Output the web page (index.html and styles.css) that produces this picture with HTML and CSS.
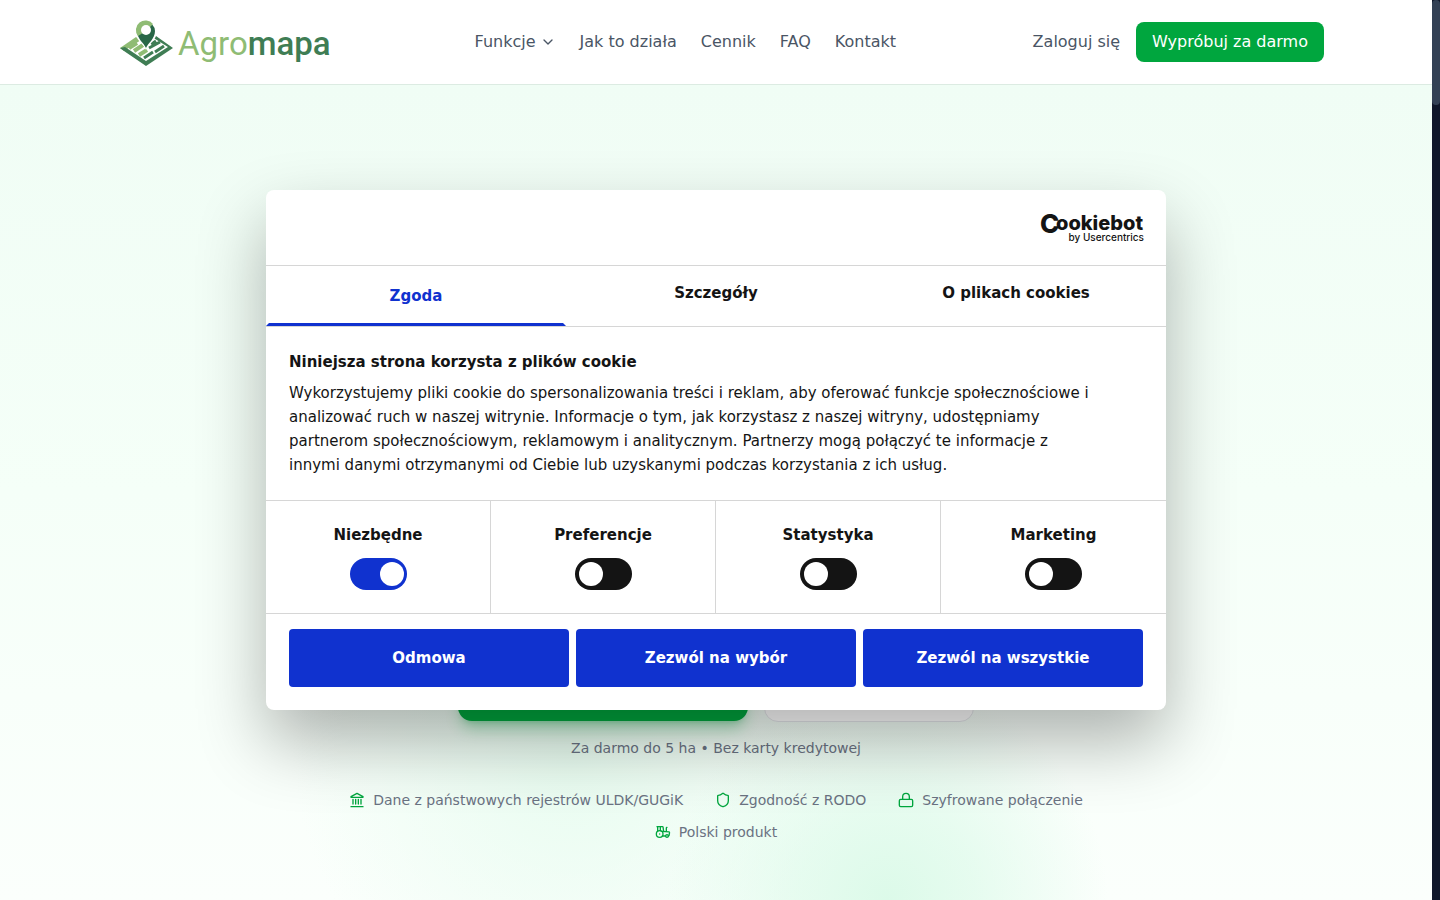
FILE: index.html
```html
<!DOCTYPE html>
<html lang="pl">
<head>
<meta charset="utf-8">
<meta name="viewport" content="width=device-width, initial-scale=1">
<title>Agromapa</title>
<link rel="stylesheet" href="styles.css">
</head>
<body class="page">
<div class="site">
  <header class="header">
    <div class="header-inner">
      <a class="logo" href="#" aria-label="Agromapa">
        <svg width="230" height="52" viewBox="0 0 230 52">
          <path d="M28 21 12 32 16 35 33 24Z" fill="#8fbc74"/>
          <path d="M16 35 12 32 17 31 38 45 60 31 44 21 48 20 65 32 38 50Z" fill="#3f7d54"/>
          <path d="m21 32 8-5M26 35l9-6M31 39l8-5" stroke="#8fbc74" stroke-width="4"/>
          <path d="m36 42 9-6M43 28l5-3M41 32l11-6M47 36l9-6" stroke="#3f7d54" stroke-width="3"/>
          <path d="M38 34C36 28 27 24 27 15a11 11 0 0 1 22 0c0 9-9 13-11 19Z" fill="#fff"/>
          <path d="M38 32C36 27 29 23 29 15a9 9 0 0 1 18 0c0 8-7 12-9 17Z" fill="#286747"/>
          <path d="M30 20a9 9 0 0 1 15-12L38 15Z" fill="#8fbc74"/>
          <circle cx="38" cy="14" r="5" fill="#fff"/>
          <text x="70" y="39" class="logo-text"><tspan class="logo-light">Agro</tspan><tspan class="logo-dark">mapa</tspan></text>
        </svg>
      </a>
      <nav class="nav" aria-label="Menu">
        <button class="nav-link nav-button" type="button">Funkcje
          <svg width="16" height="16" viewBox="0 0 24 24" fill="none" stroke="currentColor" stroke-width="2" stroke-linecap="round" stroke-linejoin="round"><path d="m6 9 6 6 6-6"/></svg>
        </button>
        <a class="nav-link" href="#">Jak to działa</a>
        <a class="nav-link" href="#">Cennik</a>
        <a class="nav-link" href="#">FAQ</a>
        <a class="nav-link" href="#">Kontakt</a>
      </nav>
      <div class="account">
        <a class="nav-link" href="#">Zaloguj się</a>
        <a class="cta" href="#">Wypróbuj za darmo</a>
      </div>
    </div>
  </header>
  <main class="hero">
    <div class="hero-actions">
      <button class="hero-button hero-primary" type="button" aria-label="Wypróbuj za darmo"></button>
      <button class="hero-button hero-secondary" type="button" aria-label="Jak to działa"></button>
    </div>
    <p class="hero-note">Za darmo do 5 ha • Bez karty kredytowej</p>
    <ul class="trust">
      <li class="trust-item">
        <svg class="trust-icon" viewBox="0 0 24 24"><path d="M3 22h18M6 18v-7M10 18v-7M14 18v-7M18 18v-7M3 7l9-5 9 5v1H3z"/></svg>
        Dane z państwowych rejestrów ULDK/GUGiK
      </li>
      <li class="trust-item">
        <svg class="trust-icon" viewBox="0 0 24 24"><path d="M20 13c0 5-3.500 7.500-7.660 8.950a1 1 0 0 1-.67-.01C7.500 20.500 4 18 4 13V6a1 1 0 0 1 1-1c2 0 4.500-1.200 6.240-2.720a1.170 1.170 0 0 1 1.520 0C14.510 3.810 17 5 19 5a1 1 0 0 1 1 1z"/></svg>
        Zgodność z RODO
      </li>
      <li class="trust-item">
        <svg class="trust-icon" viewBox="0 0 24 24"><rect x="2" y="11" width="20" height="11" rx="2"/><path d="M7 11V7a5 5 0 0 1 10 0v4"/></svg>
        Szyfrowane połączenie
      </li>
      <li class="trust-item">
        <svg class="trust-icon" viewBox="0 0 24 24"><path d="m10 11 11 .9a1 1 0 0 1 .8 1.100l-.665 4.158a1 1 0 0 1-.988.842H20M16 18h-5M18 5a1 1 0 0 0-1 1v5.573M3 4h8.129a1 1 0 0 1 .99.863L13 11.246M4 11V4M7 15h.01M8 10.100V4"/><circle cx="18" cy="18" r="2"/><circle cx="7" cy="15" r="5"/></svg>
        Polski produkt
      </li>
    </ul>
  </main>
</div>
<div class="scroll-track"><div class="scroll-thumb"></div></div>

<div class="overlay">
  <section class="dialog" role="dialog" aria-labelledby="dialog-title">
    <div class="dialog-head">
      <svg class="cookiebot" width="108" height="44" viewBox="0 0 108 44" role="img" aria-label="Cookiebot by Usercentrics">
        <text class="cb-name"><tspan class="cb-initial" x="1" y="28">C</tspan><tspan x="17" y="25">ookiebot</tspan></text>
        <text class="cb-by" x="105" y="36" text-anchor="end">by Usercentrics</text>
      </svg>
    </div>
    <div class="tabs" role="tablist">
      <button class="tab tab-active" type="button" role="tab" aria-selected="true">Zgoda</button>
      <button class="tab" type="button" role="tab" aria-selected="false">Szczegóły</button>
      <button class="tab" type="button" role="tab" aria-selected="false">O plikach cookies</button>
    </div>
    <div class="dialog-body">
      <h2 class="dialog-title" id="dialog-title">Niniejsza strona korzysta z plików cookie</h2>
      <p class="dialog-text">Wykorzystujemy pliki cookie do spersonalizowania treści i reklam, aby oferować funkcje społecznościowe i analizować ruch w naszej witrynie. Informacje o tym, jak korzystasz z naszej witryny, udostępniamy partnerom społecznościowym, reklamowym i analitycznym. Partnerzy mogą połączyć te informacje z innymi danymi otrzymanymi od Ciebie lub uzyskanymi podczas korzystania z ich usług.</p>
    </div>
    <div class="choices">
      <label class="choice">Niezbędne<input class="switch" type="checkbox" checked></label>
      <label class="choice">Preferencje<input class="switch" type="checkbox"></label>
      <label class="choice">Statystyka<input class="switch" type="checkbox"></label>
      <label class="choice">Marketing<input class="switch" type="checkbox"></label>
    </div>
    <div class="dialog-actions">
      <button class="action" type="button">Odmowa</button>
      <button class="action" type="button">Zezwól na wybór</button>
      <button class="action" type="button">Zezwól na wszystkie</button>
    </div>
  </section>
</div>
</body>
</html>
```
FILE: styles.css
```css
* {
  box-sizing: border-box;
}

.page {
  margin: 0;
  min-height: 100vh;
  display: flex;
  position: relative;
  font-family: "DejaVu Sans", sans-serif;
  font-size: 16px;
  line-height: 24px;
  color: #141414;
}

button {
  font: inherit;
  color: inherit;
  border: 0;
  background: none;
  padding: 0;
  cursor: pointer;
}

a {
  color: inherit;
  text-decoration: none;
}

svg {
  display: block;
  flex: none;
}

.site {
  flex: 1;
  display: flex;
  flex-direction: column;
}

.scroll-track {
  width: 8px;
  background: #0f172a;
}

.scroll-thumb {
  height: 105px;
  border-radius: 4px;
  background: #334155;
}

.header {
  background: #fff;
  border-bottom: 1px solid #dcebe2;
}

.header-inner {
  max-width: 1280px;
  margin: 0 auto;
  padding: 16px 32px;
  display: flex;
  align-items: center;
  justify-content: space-between;
}

.logo-text {
  font-family: Roboto, sans-serif;
  font-size: 33px;
}

.logo-light {
  fill: #8fbc74;
}

.logo-dark {
  fill: #3f7d54;
  font-weight: 500;
}

.nav {
  display: flex;
  gap: 24px;
}

.nav-link {
  color: #4a5565;
}

.nav-button {
  display: flex;
  align-items: center;
  gap: 4px;
}

.account {
  display: flex;
  align-items: center;
  gap: 16px;
}

.cta {
  padding: 8px 16px;
  border-radius: 8px;
  background: #00a63e;
  color: #fff;
}

.hero {
  flex: 1;
  display: flex;
  flex-direction: column;
  align-items: center;
  justify-content: flex-end;
  padding: 96px 32px 58px;
  background:
    radial-gradient(circle at 62% 100%, #dcfae9 0, #dcfae9aa 90px, #dcfae900 220px),
    radial-gradient(circle at 40% 82%, #e8fcf0 0, #e8fcf000 280px),
    linear-gradient(#f0fdf5, #f5fff8 50%, #fbfffc);
}

.hero-actions {
  display: flex;
  align-items: flex-start;
  gap: 16px;
}

.hero-button {
  height: 60px;
  border-radius: 14px;
}

.hero-primary {
  width: 290px;
  height: 59px;
  background: #00a63e;
  box-shadow: 0 10px 15px -3px #00a63e4d, 0 4px 6px -4px #00a63e4d;
}

.hero-secondary {
  width: 210px;
  background: #fff;
  border: 1px solid #e5e7eb;
}

.hero-note {
  margin: 16px 0 32px;
  font-size: 14px;
  line-height: 20px;
  color: #6a7282;
}

.trust {
  list-style: none;
  max-width: 768px;
  margin: 0;
  padding: 0;
  display: flex;
  flex-wrap: wrap;
  justify-content: center;
  gap: 12px 32px;
  font-size: 14px;
  line-height: 20px;
  color: #6a7282;
}

.trust-item {
  display: flex;
  align-items: center;
  gap: 8px;
}

.trust-icon {
  width: 16px;
  height: 16px;
  fill: none;
  stroke: #00a63e;
  stroke-width: 2;
  stroke-linecap: round;
  stroke-linejoin: round;
}

.overlay {
  position: absolute;
  inset: 0 8px 0 0;
  display: grid;
  place-items: center;
}

.dialog {
  width: 100%;
  max-width: 900px;
  overflow: hidden;
  border-radius: 8px;
  background: #fff;
  box-shadow: 0 32px 68px rgba(0, 0, 0, 0.3);
  font-size: 15px;
}

.dialog-head {
  display: flex;
  justify-content: flex-end;
  padding: 15px 19px 16px;
  border-bottom: 1px solid #d6d6d6;
}

.cb-name {
  font-family: Inter, sans-serif;
  font-weight: 800;
  font-size: 20px;
  fill: #141414;
}

.cb-initial {
  font-size: 26px;
}

.cb-by {
  font-family: Inter, sans-serif;
  font-size: 10px;
  font-weight: 500;
  fill: #141414;
}

.tabs {
  display: grid;
  grid-template-columns: repeat(3, 1fr);
  border-bottom: 1px solid #d6d6d6;
}

.tab {
  padding: 15px 8px 21px;
  font-weight: 700;
}

.tab-active {
  padding: 18px 8px 15px;
  border-bottom: 3px solid #1032cf;
  border-radius: 4px 4px 0 0;
  border-left: 3px solid transparent;
  border-right: 3px solid transparent;
  color: #1032cf;
}

.dialog-body {
  padding: 23px;
}

.dialog-title {
  margin: 0 0 7px;
  font-size: 15px;
  line-height: 24px;
}

.dialog-text {
  max-width: 808px;
  margin: 0;
}

.choices {
  display: grid;
  grid-template-columns: repeat(4, 1fr);
  border-top: 1px solid #d6d6d6;
  border-bottom: 1px solid #d6d6d6;
}

.choice {
  display: flex;
  flex-direction: column;
  align-items: center;
  gap: 11px;
  padding: 22px 8px 23px;
  border-right: 1px solid #d6d6d6;
  font-weight: 700;
}

.choice:last-child {
  border-right: 0;
}

.switch {
  appearance: none;
  margin: 0;
  width: 57px;
  height: 32px;
  padding: 4px 3px 4px 4px;
  border-radius: 16px;
  background: #141414;
  display: flex;
}

.switch::before {
  content: "";
  width: 24px;
  height: 24px;
  border-radius: 50%;
  background: #fff;
}

.switch:checked {
  background: #1032cf;
  justify-content: flex-end;
}

.dialog-actions {
  display: grid;
  grid-template-columns: repeat(3, 1fr);
  gap: 7px;
  padding: 15px 23px 23px;
}

.action {
  padding: 17px 8px;
  border-radius: 4px;
  background: #1032cf;
  color: #fff;
  font-weight: 700;
}
```
